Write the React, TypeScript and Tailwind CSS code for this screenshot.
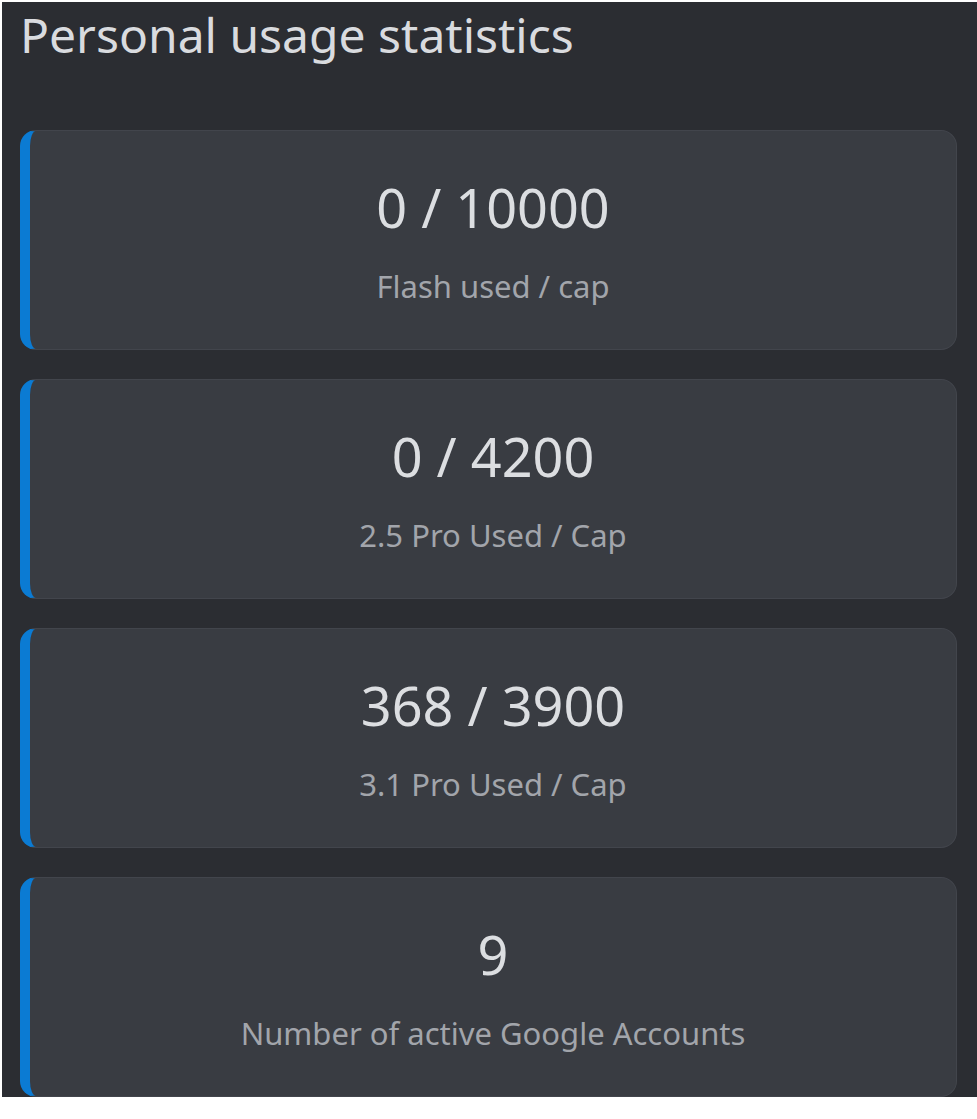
import React from 'react';

const stats = [
  { value: '0 / 10000', label: 'Flash used / cap' },
  { value: '0 / 4200', label: '2.5 Pro Used / Cap' },
  { value: '368 / 3900', label: '3.1 Pro Used / Cap' },
  { value: '9', label: 'Number of active Google Accounts' },
];

function StatCard({ value, label }: { value: string; label: string }) {
  return (
    <div className="h-[220px] shrink-0 rounded-[16px] border border-[#42454c] border-l-[10px] border-l-[#0b7bd3] bg-[#393c42] flex flex-col items-center pt-[46px]">
      <div className="text-[54px] leading-[60px] text-[#dcdee1]">{value}</div>
      <div className="mt-[30px] text-[31px] leading-[38px] text-[#a2a5ab]">{label}</div>
    </div>
  );
}

export default function App() {
  return (
    <div className="w-[977px] h-[1119px] bg-white pl-[2px] pt-[2px] overflow-hidden" style={{ fontFamily: '"Noto Sans", "Open Sans", sans-serif' }}>
      <div className="h-[1095px] bg-[#2b2d32] pl-[18px] pr-[20px] overflow-hidden">
        <h1 className="pt-[1px] text-[48px] leading-[64px] text-[#d9dbdf] font-normal">Personal usage statistics</h1>
        <div className="mt-[63px] flex flex-col gap-[29px]">
          {stats.map((s) => (
            <StatCard key={s.label} value={s.value} label={s.label} />
          ))}
        </div>
      </div>
    </div>
  );
}
